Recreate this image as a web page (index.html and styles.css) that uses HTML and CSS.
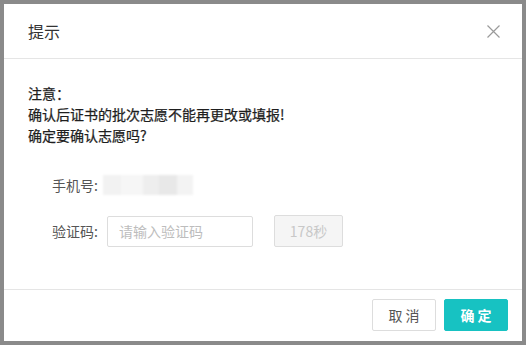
FILE: index.html
```html
<!DOCTYPE html>
<html lang="zh">
<head>
<meta charset="utf-8">
<title>提示</title>
<link rel="stylesheet" href="styles.css">
</head>
<body>
<div class="modal">
  <div class="modal-header">
    <span class="modal-title">提示</span>
    <span class="close">
      <svg width="13" height="13" viewBox="0 0 13 13"><path d="M0.5 0.5 L12.5 12.5 M12.5 0.5 L0.5 12.5" stroke="#9a9a9a" stroke-width="1.2" fill="none"/></svg>
    </span>
  </div>
  <div class="modal-body">
    <div class="notice">
      <p>注意：</p>
      <p>确认后证书的批次志愿不能再更改或填报!</p>
      <p>确定要确认志愿吗?</p>
    </div>
    <div class="form">
      <div class="row">
        <span class="label">手机号:</span>
        <span class="masked">
          <i class="m1"></i><i class="m2"></i><i class="m3"></i><i class="m4"></i><i class="m5"></i>
        </span>
      </div>
      <div class="row">
        <span class="label">验证码:</span>
        <input class="code-input" type="text" placeholder="请输入验证码">
        <button class="count-btn" disabled>178秒</button>
      </div>
    </div>
  </div>
  <div class="modal-footer">
    <button class="btn btn-default">取 消</button>
    <button class="btn btn-primary">确 定</button>
  </div>
</div>
</body>
</html>
```
FILE: styles.css
```css
* { box-sizing: border-box; }
html, body { margin: 0; padding: 0; }
body {
  background: #8a8a8a;
  width: 526px;
  height: 345px;
  overflow: hidden;
  font-family: "Microsoft YaHei", "Noto Sans CJK SC", sans-serif;
  font-size: 14px;
  color: #333;
}
.modal {
  margin: 4px 0 0 4px;
  width: 518px;
  height: 337px;
  background: #fff;
  display: flex;
  flex-direction: column;
}
.modal-header {
  height: 55px;
  padding: 0 22px 0 24px;
  border-bottom: 1px solid #e5e5e5;
  display: flex;
  align-items: center;
  justify-content: space-between;
}
.modal-title {
  font-size: 16px;
  color: #333;
}
.close { display: flex; margin-top: 1px; }
.modal-body {
  flex: 1;
  padding: 24px 24px 0 24px;
}
.notice p {
  margin: 0;
  line-height: 21px;
  font-weight: normal;
  color: #1e1e1e;
  -webkit-text-stroke: 0.25px #1e1e1e;
}
.form {
  margin-top: 23px;
  padding-left: 24px;
  display: flex;
  flex-direction: column;
  gap: 14px;
}
.row {
  height: 32px;
  display: flex;
  align-items: center;
}
.label {
  color: #555;
  width: 51px;
}
.masked {
  display: flex;
  align-items: center;
  height: 24px;
  filter: blur(1.2px);
}
.masked i { display: block; height: 20px; }
.m1 { width: 18px; background: #f2f2f2; }
.m2 { width: 22px; background: #f6f6f6; }
.m3 { width: 16px; background: #eeeeee; }
.m4 { width: 18px; background: #e8e8e8; }
.m5 { width: 16px; background: #f3f3f3; }
.code-input {
  margin-left: 4px;
  width: 146px;
  height: 31px;
  border: 1px solid #ddd;
  border-radius: 2px;
  padding: 0 11px;
  font: inherit;
  color: #333;
  outline: none;
}
.code-input::placeholder { color: #bdbdbd; }
.count-btn {
  margin-left: 21px;
  width: 69px;
  height: 32px;
  border: 1px solid #ddd;
  border-radius: 2px;
  background: #f5f5f5;
  color: #c8c8c8;
  font: inherit;
  padding: 0;
}
.modal-footer {
  height: 52px;
  border-top: 1px solid #e5e5e5;
  display: flex;
  justify-content: flex-end;
  align-items: center;
  gap: 8px;
  padding: 0 14px 1px 0;
}
.btn {
  width: 64px;
  height: 32px;
  border-radius: 2px;
  font: inherit;
  padding: 0;
}
.btn-default {
  background: #fff;
  border: 1px solid #ddd;
  color: #555;
}
.btn-primary {
  background: #17c2c2;
  border: 1px solid #17c2c2;
  color: #fff;
  font-weight: bold;
}
```
